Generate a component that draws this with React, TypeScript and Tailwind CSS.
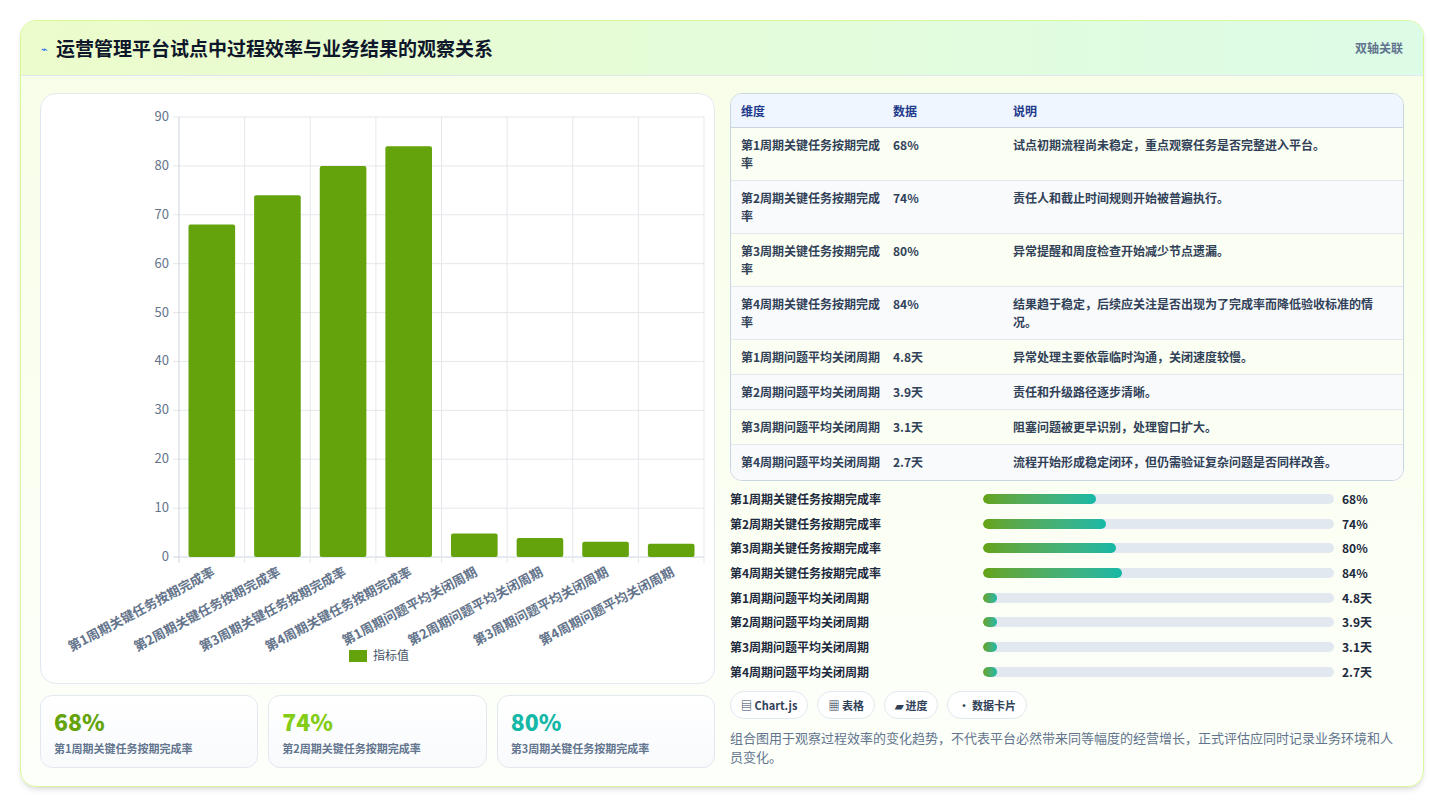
import React from "react";

const rows = [
  { n: "第1周期关键任务按期完成率", v: "68%", d: "试点初期流程尚未稳定，重点观察任务是否完整进入平台。", num: 68, tall: true },
  { n: "第2周期关键任务按期完成率", v: "74%", d: "责任人和截止时间规则开始被普遍执行。", num: 74, tall: true },
  { n: "第3周期关键任务按期完成率", v: "80%", d: "异常提醒和周度检查开始减少节点遗漏。", num: 80, tall: true },
  { n: "第4周期关键任务按期完成率", v: "84%", d: "结果趋于稳定，后续应关注是否出现为了完成率而降低验收标准的情况。", num: 84, tall: true },
  { n: "第1周期问题平均关闭周期", v: "4.8天", d: "异常处理主要依靠临时沟通，关闭速度较慢。", num: 4.8, tall: false },
  { n: "第2周期问题平均关闭周期", v: "3.9天", d: "责任和升级路径逐步清晰。", num: 3.9, tall: false },
  { n: "第3周期问题平均关闭周期", v: "3.1天", d: "阻塞问题被更早识别，处理窗口扩大。", num: 3.1, tall: false },
  { n: "第4周期问题平均关闭周期", v: "2.7天", d: "流程开始形成稳定闭环，但仍需验证复杂问题是否同样改善。", num: 2.7, tall: false },
];

function Chart() {
  const L = 138, R = 663, T = 23, B = 463;
  const step = (R - L) / 8;
  const y = (v: number) => B - (v / 90) * (B - T);
  return (
    <svg width="675" height="590" viewBox="0 0 675 590" className="block">
      {[0, 10, 20, 30, 40, 50, 60, 70, 80, 90].map((t) => (
        <g key={t}>
          <line x1={L - 6} x2={R} y1={y(t)} y2={y(t)} stroke={t === 0 ? "#cbd5e1" : "#e5e7eb"} />
          <text x={L - 10} y={y(t) + 4} textAnchor="end" fontSize="13" fill="#64748b">{t}</text>
        </g>
      ))}
      {Array.from({ length: 9 }).map((_, i) => (
        <line key={i} x1={L + i * step} x2={L + i * step} y1={T} y2={B + 6} stroke={i === 0 ? "#cbd5e1" : "#e5e7eb"} />
      ))}
      {rows.map((r, i) => {
        const x = L + i * step + 9.5;
        return <rect key={i} x={x} y={y(r.num)} width={step - 19} height={B - y(r.num)} rx="2" fill="#65a30d" />;
      })}
      {rows.map((r, i) => {
        const cx = L + (i + 0.5) * step + 4;
        return (
          <text key={i} x={cx} y={B + 18} textAnchor="end" fontSize="13" fontWeight="700" fill="#64748b" transform={`rotate(-28 ${cx} ${B + 18})`}>
            {r.n}
          </text>
        );
      })}
      <rect x="308" y="556" width="18" height="12" fill="#65a30d" />
      <text x="332" y="566" fontSize="12" fill="#475569">指标值</text>
    </svg>
  );
}

export default function App() {
  return (
    <div className="min-h-screen bg-white p-5 text-slate-800" style={{ fontFamily: '"Noto Sans CJK SC", "Noto Sans", sans-serif' }}>
      <div className="rounded-2xl border border-lime-200 bg-gradient-to-b from-[#f7fee7] to-[#fdfffa] shadow-md overflow-hidden">
        <div className="h-[55px] flex items-center justify-between px-5 bg-gradient-to-r from-[#ecfccb] to-[#dcfce7] border-b border-slate-200">
          <div className="flex items-center gap-2">
            <span className="text-[11px] text-blue-600">⌁</span>
            <h1 className="text-[19px] font-bold text-slate-900">运营管理平台试点中过程效率与业务结果的观察关系</h1>
          </div>
          <span className="text-[12px] font-semibold text-slate-500">双轴关联</span>
        </div>
        <div className="flex gap-[15px] px-[19px] pt-[17px] pb-[18px]">
          <div className="w-[675px] flex flex-col gap-[11px]">
            <div className="h-[591px] rounded-2xl border border-slate-200 bg-white overflow-hidden">
              <Chart />
            </div>
            <div className="grid grid-cols-3 gap-[10px]">
              {[
                ["68%", "text-[#65a30d]", "第1周期关键任务按期完成率"],
                ["74%", "text-[#84cc16]", "第2周期关键任务按期完成率"],
                ["80%", "text-[#14b8a6]", "第3周期关键任务按期完成率"],
              ].map(([v, c, l]) => (
                <div key={l} className="h-[73px] rounded-xl border border-slate-200 bg-gradient-to-b from-white to-[#f8fafc] px-[13px] pt-[11px]">
                  <div className={`text-[23px] font-extrabold leading-[28px] ${c}`}>{v}</div>
                  <div className="text-[11px] font-semibold text-slate-500 mt-[5px]">{l}</div>
                </div>
              ))}
            </div>
          </div>
          <div className="w-[676px] flex flex-col">
            <div className="rounded-xl border border-slate-300 overflow-hidden text-[12px]">
              <div className="flex h-[34px] items-center bg-[#eff6ff] border-b border-slate-300 font-semibold text-[#1e3a8a]">
                <div className="w-[162px] pl-[10px]">维度</div>
                <div className="w-[120px]">数据</div>
                <div className="flex-1">说明</div>
              </div>
              {rows.map((r, i) => (
                <div key={i} className={`flex ${r.tall ? "h-[53px]" : "h-[35px]"} pt-[8px] font-semibold text-slate-700 leading-[18px] ${i < 7 ? "border-b border-slate-200" : ""} ${i % 2 === 0 ? "bg-[#fbfef2]" : "bg-[#f8fafc]"}`}>
                  <div className="w-[162px] pl-[10px] pr-[12px]">{r.n}</div>
                  <div className="w-[120px]">{r.v}</div>
                  <div className="flex-1 pr-[30px]">{r.d}</div>
                </div>
              ))}
            </div>
            <div className="mt-[9px] flex flex-col gap-[6.7px]">
              {rows.map((r, i) => (
                <div key={i} className="flex items-center h-[18px] text-[12px] font-semibold text-slate-800">
                  <div className="w-[253px]">{r.n}</div>
                  <div className="w-[351px] h-[10px] rounded-full bg-slate-200 overflow-hidden">
                    <div className="h-full rounded-full bg-gradient-to-r from-[#65a30d] to-[#14b8a6]" style={{ width: r.tall ? `${r.num * 0.472}%` : "14px" }} />
                  </div>
                  <div className="pl-[8px] font-bold">{r.v}</div>
                </div>
              ))}
            </div>
            <div className="flex gap-[9px] mt-[10px]">
              {["▤ Chart.js", "▦ 表格", "▰ 进度", "• 数据卡片"].map((c) => (
                <span key={c} className="h-[28px] flex items-center px-[10px] rounded-full border border-slate-200 bg-white text-[11px] font-bold text-slate-700">{c}</span>
              ))}
            </div>
            <p className="mt-[9px] text-[13px] leading-[19px] text-slate-500">组合图用于观察过程效率的变化趋势，不代表平台必然带来同等幅度的经营增长，正式评估应同时记录业务环境和人员变化。</p>
          </div>
        </div>
      </div>
    </div>
  );
}
